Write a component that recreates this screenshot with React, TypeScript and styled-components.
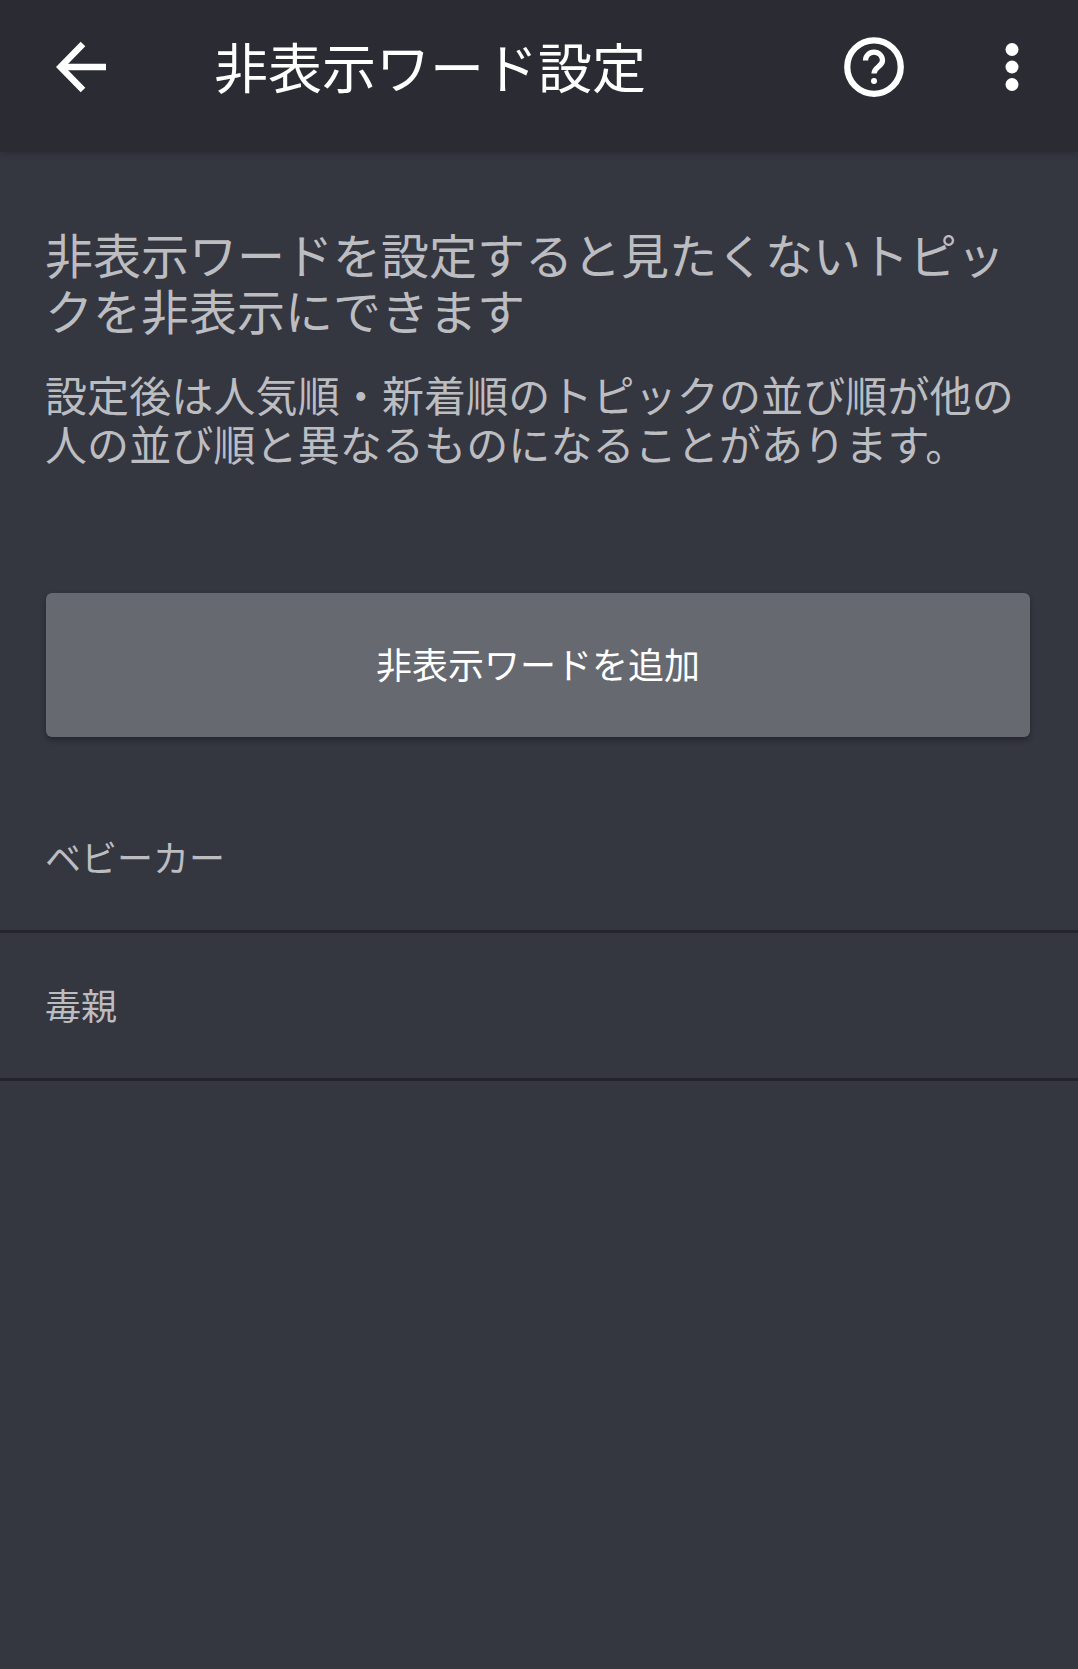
import React from "react";
import styled, { createGlobalStyle } from "styled-components";

const Global = createGlobalStyle`
  html, body { margin: 0; padding: 0; background: #343640; }
  * { box-sizing: border-box; }
`;

const Page = styled.div`
  width: 1078px;
  height: 1669px;
  background: #343640;
  overflow: hidden;
  font-family: "Noto Sans CJK JP", "Noto Sans", sans-serif;
`;

const Header = styled.header`
  height: 152px;
  background: #2b2c33;
  box-shadow: 0 2px 6px rgba(30, 31, 38, 0.35);
  display: flex;
  align-items: flex-start;
  padding: 37px 58px 0 56px;
  color: #fff;
`;

const Back = styled.svg`
  width: 50px;
  height: 60px;
  flex: none;
`;

const Title = styled.h1`
  margin: 0 0 0 108px;
  font-size: 54px;
  line-height: 58px;
  font-weight: 400;
  flex: 1;
  white-space: nowrap;
`;

const HelpIcon = styled.svg`
  width: 60px;
  height: 60px;
  flex: none;
`;

const MoreIcon = styled.svg`
  width: 16px;
  height: 60px;
  margin-left: 100px;
  flex: none;
`;

const Intro = styled.section`
  padding: 73px 44px 0 45px;
`;

const Lead = styled.p`
  margin: 0;
  font-size: 48px;
  line-height: 56px;
  color: #bcbdc1;
  width: 986px;
`;

const Note = styled.p`
  margin: 32px 0 0;
  font-size: 42px;
  letter-spacing: 0.12px;
  line-height: 49px;
  color: #bcbdc1;
  width: 986px;
`;

const AddButton = styled.button`
  display: flex;
  align-items: center;
  justify-content: center;
  width: 984px;
  height: 144px;
  margin: 126px 0 0 46px;
  padding: 0 0 4px;
  border: none;
  border-radius: 6px;
  background: #666970;
  color: #fff;
  font: inherit;
  font-size: 36px;
  box-shadow: 0 3px 5px rgba(28, 29, 36, 0.6);
`;

const List = styled.ul`
  list-style: none;
  margin: 48px 0 0;
  padding: 0;
`;

const Row = styled.li`
  height: 148px;
  display: flex;
  align-items: center;
  padding: 0 45px 4px;
  font-size: 36px;
  color: #bcbdc1;
  border-bottom: 3px solid #24252c;
`;

export default function App() {
  return (
    <Page>
      <Global />
      <Header>
        <Back viewBox="0 0 50 60" fill="none" stroke="#fff" strokeWidth="6.5">
          <path d="M50 30H5" />
          <path d="M27 7L4.5 30L27 53" />
        </Back>
        <Title>非表示ワード設定</Title>
        <HelpIcon viewBox="0 0 24 24" fill="none" stroke="#fff">
          <circle cx="12" cy="12" r="10.7" strokeWidth="2.5" />
          <path d="M8.6 9.4a3.4 3.4 0 0 1 6.8 0c0 2.4-3.4 2.6-3.4 5.2" strokeWidth="2.1" />
          <circle cx="12" cy="17.6" r="1.2" fill="#fff" stroke="none" />
        </HelpIcon>
        <MoreIcon viewBox="0 0 16 60" fill="#fff">
          <circle cx="8" cy="12.5" r="6.5" />
          <circle cx="8" cy="30" r="6.5" />
          <circle cx="8" cy="47.5" r="6.5" />
        </MoreIcon>
      </Header>
      <Intro>
        <Lead>非表示ワードを設定すると見たくないトピックを非表示にできます</Lead>
        <Note>設定後は人気順・新着順のトピックの並び順が他の人の並び順と異なるものになることがあります。</Note>
      </Intro>
      <AddButton>非表示ワードを追加</AddButton>
      <List>
        <Row>ベビーカー</Row>
        <Row>毒親</Row>
      </List>
    </Page>
  );
}
